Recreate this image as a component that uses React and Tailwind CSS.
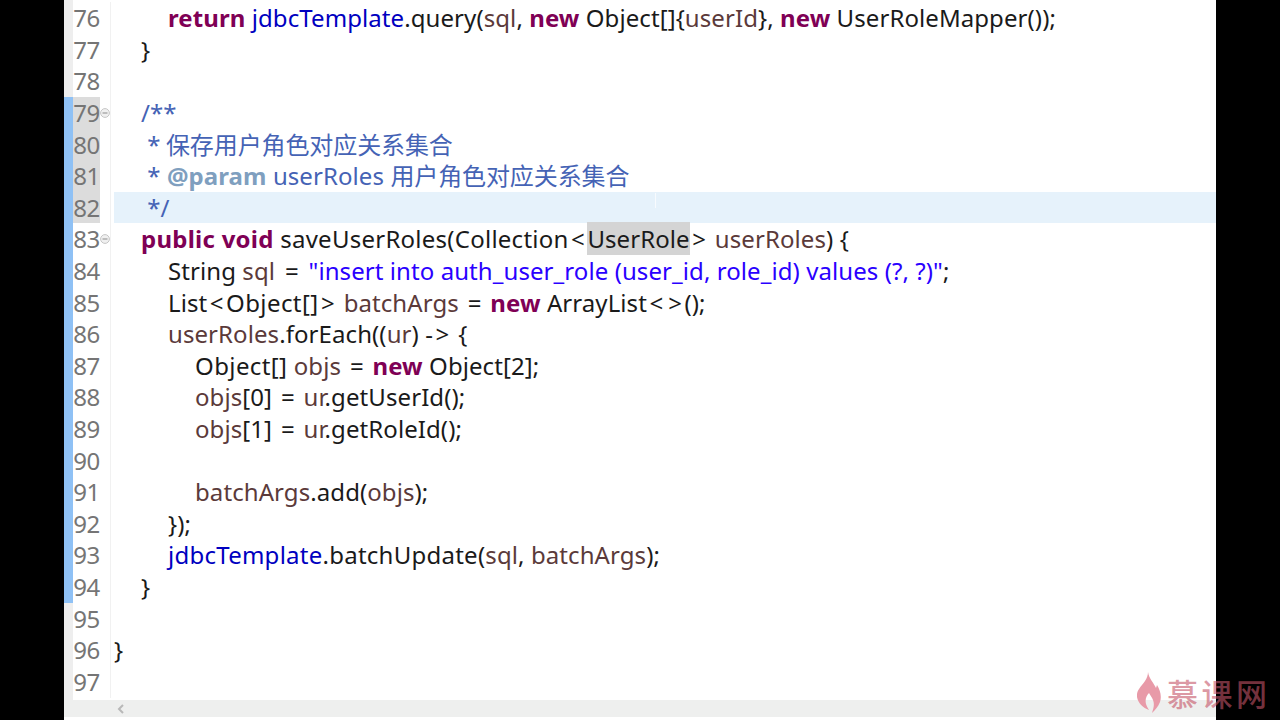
const K = ({ children }) => <span className="font-bold text-[#7f0055]">{children}</span>;
const F = ({ children }) => <span className="text-[#5b3a3a]">{children}</span>;
const B = ({ children }) => <span className="text-[#0000c0]">{children}</span>;
const S = ({ children }) => <span className="text-[#2a00ff]">{children}</span>;
const D = ({ children }) => <span className="text-[#4563b5]">{children}</span>;
const Op = ({ children }) => <span className="px-[2.5px]">{children}</span>;
const C = ({ children }) => <span className="tracking-[-0.1px]">{children}</span>;
const Wide = ({ children }) => <span className="tracking-[0.25px]">{children}</span>;
const Arr = ({ children }) => <span className="tracking-[0.4px]">{children}</span>;

const lines = [
  [76, 2, <><K>return</K> <B>jdbcTemplate</B>.query(<F>sql</F>, <K>new</K> Object[]{"{"}<F>userId</F>{"}"}, <K>new</K> UserRoleMapper());</>],
  [77, 1, "}"],
  [78, 0, null],
  [79, 1, <D>/**</D>],
  [80, 1, <D>&nbsp;* <span className="-ml-[1px]"><C>保存用户角色对应关系集合</C></span></D>],
  [81, 1, <D>&nbsp;* <span className="font-bold text-[#7f9fbf]">@param</span> userRoles <C>用户角色对应关系集合</C></D>],
  [82, 1, <D>&nbsp;*/</D>],
  [83, 1, <><Wide><K>public</K> <K>void</K> saveUserRoles(Collection</Wide><Op>&lt;</Op><span className="bg-[#d4d4d4]">UserRole</span><Op>&gt;</Op> <F>userRoles</F>) {"{"}</>],
  [84, 2, <>String <F>sql</F> <span className="px-[3.5px]">=</span> <S>"insert into auth_user_role (user_id, role_id) values (?, ?)"</S>;</>],
  [85, 2, <>List<Op>&lt;</Op><Arr>Object[]</Arr><Op>&gt;</Op> <F>batchArgs</F> <Op>=</Op> <K>new</K> ArrayList<Op>&lt;</Op><Op>&gt;</Op>();</>],
  [86, 2, <><F>userRoles</F>.forEach((<F>ur</F>) -<Op>&gt;</Op> {"{"}</>],
  [87, 3, <><Arr>Object[]</Arr> <F>objs</F> <Op>=</Op> <K>new</K> Object[2];</>],
  [88, 3, <><F>objs</F>[0] <Op>=</Op> <F>ur</F>.getUserId();</>],
  [89, 3, <><F>objs</F>[1] <Op>=</Op> <F>ur</F>.getRoleId();</>],
  [90, 0, null],
  [91, 3, <><F>batchArgs</F>.add(<F>objs</F>);</>],
  [92, 2, "});"],
  [93, 2, <><Wide><B>jdbcTemplate</B>.batchUpdate(</Wide><F>sql</F>, <F>batchArgs</F>);</>],
  [94, 1, "}"],
  [95, 0, null],
  [96, 0, "}"],
  [97, 0, null],
];
const indent = ["pl-0", "pl-[27px]", "pl-[54px]", "pl-[81px]"];

export default function App() {
  return (
    <div className="h-[720px] w-[1280px] overflow-hidden bg-black px-16 font-['Noto_Sans','Noto_Sans_CJK_SC',sans-serif] text-[24px] text-[#1a1a1a]">
      <div className="relative flex h-full flex-col bg-white">
        <div className="flex min-h-0 flex-1 overflow-hidden">
          <div className="flex w-[9px] flex-col bg-[#eeeeee]">
            <div className="h-[97px]" />
            <div className="h-[506px] bg-[#8fc1f5]" />
          </div>
          <div className="flex-1 pt-[2.1px] tracking-[0.08px]">
            {lines.map(([n, lvl, code]) => (
              <div key={n} className={`relative flex h-[31.62px] items-center leading-[31.62px] ${n === 82 ? "bg-[#e6f2fb]" : ""}`}>
                <div className={`flex h-full w-[27px] shrink-0 justify-end tracking-[-0.3px] text-[#757575] ${n >= 79 && n <= 82 ? "bg-[#dcdcdc]" : "bg-white"}`}>{n}</div>
                <div className={`h-full w-[14px] shrink-0 ${n === 82 ? "bg-white" : ""}`}>
                  <div className="flex h-full w-[11px] items-center border-r border-[#f1f1f1]">
                    {(n === 79 || n === 83) && (
                      <svg width="10" height="10" viewBox="0 0 10 10">
                        <circle cx="5" cy="5" r="4.4" fill="#f0f0f0" stroke="#c6c6c6" />
                        <path d="M2.5 5h5" stroke="#8a8a8a" />
                      </svg>
                    )}
                  </div>
                </div>
                <div className={`min-w-0 flex-1 whitespace-pre ${indent[lvl]}`}>{code}</div>
                {n === 82 && <div className="absolute left-[582px] top-[1px] h-[15px] w-px bg-white/70" />}
              </div>
            ))}
          </div>
        </div>
        <div className="flex h-[17px] shrink-0 items-center bg-[#eeefee] pl-[53px]">
          <svg width="8" height="10" viewBox="0 0 8 10"><path d="M6 1L2 5l4 4" fill="none" stroke="#b8b8b8" strokeWidth="2" /></svg>
        </div>
        <div className="h-[3px] shrink-0 bg-white" />
        <div className="absolute bottom-[7px] right-[-54.5px] flex items-center gap-[6px]">
          <svg width="24" height="41" viewBox="0 0 24 41">
            <path d="M11 0C12 7 17 11 19 16L20 13C23 18 25 24 23 30C21 35 18 38 15 41C16 37 18 33 16 28C15 25 13 23 12 21C9 24 8 28 9 32C10 35 11 36 12 38C6 36 1 31 0 25C-1 18 5 14 8 9C10 6 11 3 11 0Z" fill="#e89aa8" />
          </svg>
          <span className="text-[31px] font-medium leading-[36px] tracking-[3.5px] text-[#c55467]/60 [font-family:'Noto_Sans_CJK_SC',sans-serif]">慕课网</span>
        </div>
      </div>
    </div>
  );
}
